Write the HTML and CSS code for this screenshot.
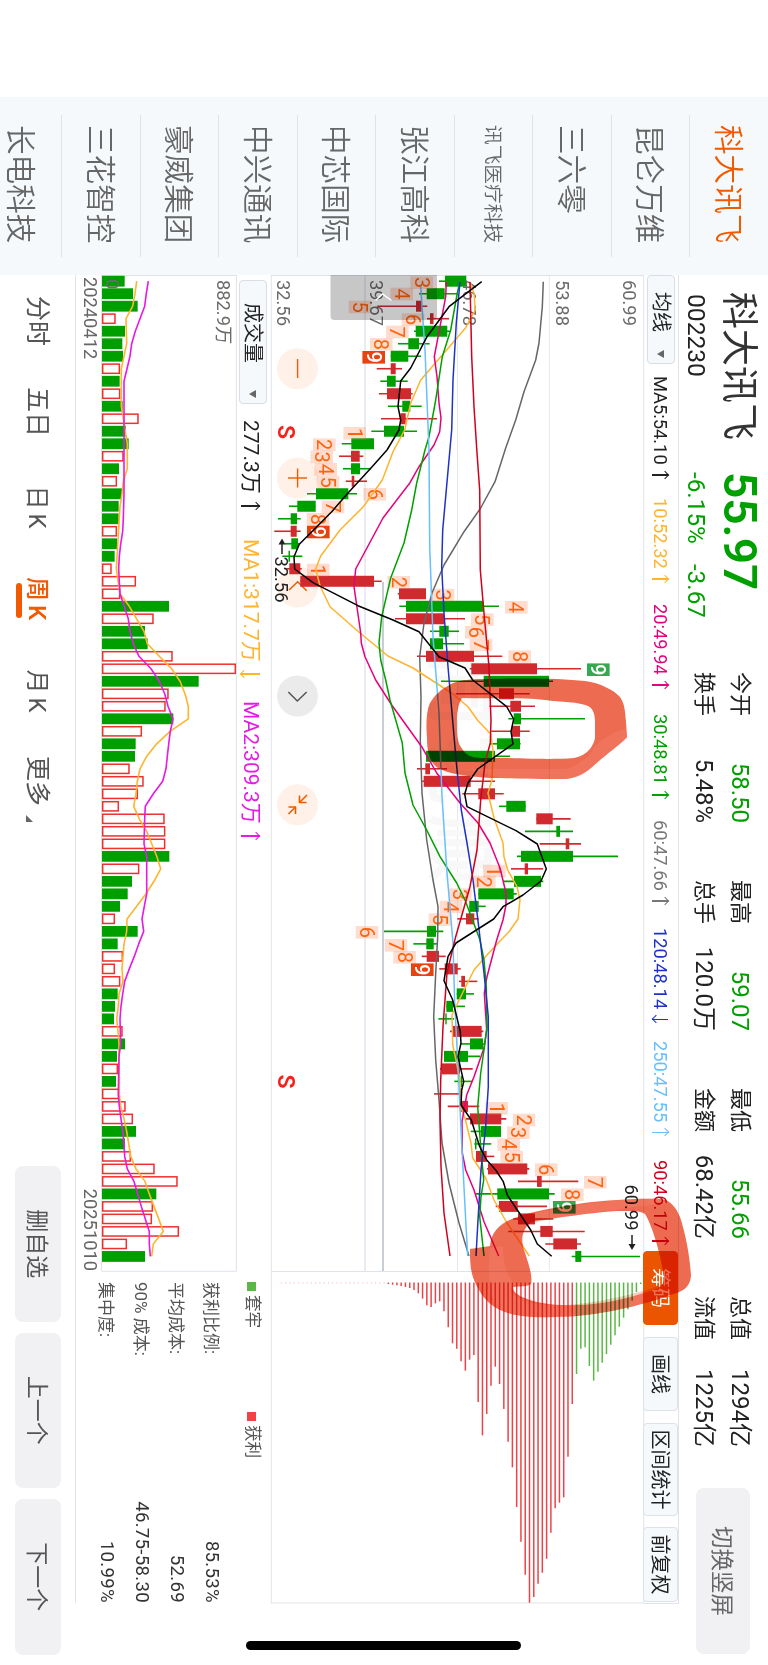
FILE: index.html
```html
<!DOCTYPE html>
<html lang="zh-CN">
<head>
<meta charset="utf-8">
<title>科大讯飞 002230</title>
<link rel="stylesheet" href="styles.css">
</head>
<body>
<div class="viewport">
<div class="screen">
  <nav class="watchlist">
    <div class="stock active">科大讯飞</div>
    <div class="stock">昆仑万维</div>
    <div class="stock">三六零</div>
    <div class="stock small">讯飞医疗科技</div>
    <div class="stock">张江高科</div>
    <div class="stock">中芯国际</div>
    <div class="stock">中兴通讯</div>
    <div class="stock">豪威集团</div>
    <div class="stock">三花智控</div>
    <div class="stock last-row">长电科技</div>
  </nav>
  <main class="main">
    <header class="quote">
      <div class="title"><div class="name">科大讯飞</div><div class="code">002230</div></div>
      <div class="last"><div class="price">55.97</div><div class="change"><span>-6.15%</span><span>-3.67</span></div></div>
      <dl class="stat"><dt>今开</dt><dd class="down">58.50</dd><dt>换手</dt><dd>5.48%</dd></dl>
      <dl class="stat"><dt>最高</dt><dd class="down">59.07</dd><dt>总手</dt><dd>120.0万</dd></dl>
      <dl class="stat"><dt>最低</dt><dd class="down">55.66</dd><dt>金额</dt><dd>68.42亿</dd></dl>
      <dl class="stat"><dt>总值</dt><dd>1294亿</dd><dt>流值</dt><dd>1225亿</dd></dl>
      <button class="switch">切换竖屏</button>
    </header>

    <div class="ma-bar">
      <div class="picker">均线<i></i></div>
      <span class="ma5">MA5:54.10<b class="ar up"></b></span>
      <span class="ma10">10:52.32<b class="ar up"></b></span>
      <span class="ma20">20:49.94<b class="ar up"></b></span>
      <span class="ma30">30:48.81<b class="ar up"></b></span>
      <span class="ma60">60:47.66<b class="ar up"></b></span>
      <span class="ma120">120:48.14<b class="ar dn"></b></span>
      <span class="ma250">250:47.55<b class="ar up"></b></span>
      <span class="ma90">90:46.17<b class="ar up"></b></span>
      <div class="tools">
        <button class="tool on">筹码</button>
        <button class="tool">画线</button>
        <button class="tool wide">区间统计</button>
        <button class="tool fq">前复权</button>
      </div>
    </div>

    <svg class="chart" id="price" viewBox="275 124 1329 374"></svg>

    <div class="lower">
      <section class="volume">
        <div class="vol-bar">
          <div class="picker vol">成交量<i></i></div>
          <span class="v0">277.3万<b class="ar up"></b></span>
          <span class="v1">MA1:317.7万<b class="ar dn"></b></span>
          <span class="v2">MA2:309.3万<b class="ar up"></b></span>
        </div>
        <svg class="volchart" id="volume" viewBox="275 530 997 137"></svg>
        <div class="dates"><span>20240412</span><span>20251010</span></div>
      </section>
      <aside class="chips">
        <div class="legend"><span><i class="sq green"></i>套牢</span><span><i class="sq red"></i>获利</span></div>
        <div class="row"><span>获利比例:</span><em>85.53%</em></div>
        <div class="row"><span>平均成本:</span><em>52.69</em></div>
        <div class="row"><span>90% 成本:</span><em>46.75-58.30</em></div>
        <div class="row"><span>集中度:</span><em>10.99%</em></div>
      </aside>
    </div>

    <footer class="periods">
      <a class="p1">分时</a><a class="p2">五日</a><a class="p3">日K</a><a class="p4 current">周K</a><a class="p5">月K</a><a class="p6">更多<i></i></a>
      <div class="actions"><button>删自选</button><button>上一个</button><button>下一个</button></div>
    </footer>
  </main>
  <svg class="pen" viewBox="0 0 768 1665">
    <path fill-rule="evenodd" d="M448 686C455 680 470 679 485 679C520 678 560 678 585 681C600 683 614 690 620 697C625 704 625 712 626 722L627 737C622 743 612 750 600 760C590 769 582 777 566 779C540 779 510 778 490 778C465 776 448 774 438 768C429 762 427 750 427 738C426 725 426 712 430 703C434 696 440 690 448 686Z M462 698C490 699 520 697 545 700C560 702 580 702 588 706C594 709 595 716 595 722L595 738C594 745 587 756 574 758C550 760 520 758 500 758C485 758 475 759 468 755C460 749 457 741 457 730C457 720 456 708 462 698Z"/>
    <path class="over" d="M626 729L627 738C618 746 606 754 598 762C588 771 580 779 564 779L500 778L470 769L566 769C580 764 590 757 594 747C602 740 612 731 626 729Z"/>
    <path fill-rule="evenodd" d="M470 1249L490 1246C491 1233 499 1224 512 1219C530 1211 560 1207 584 1203C610 1200 640 1198 661 1199C670 1200 676 1207 680 1217C686 1235 690 1258 691 1276C690 1288 682 1292 670 1295C650 1303 610 1313 577 1316C545 1318 520 1318 505 1312C488 1306 480 1294 474 1280C470 1270 470 1260 470 1249Z M531 1222C550 1218 600 1212 617 1211C630 1211 640 1210 645 1214C652 1225 660 1252 664 1276C665 1284 660 1289 650 1291C630 1298 600 1305 577 1305C555 1306 535 1303 522 1297C516 1294 513 1291 513 1287C520 1286 527 1287 531 1284C533 1276 528 1262 524 1250C521 1240 521 1231 531 1222Z"/>
    <path class="over" d="M490 1248L503 1246C503 1262 506 1276 516 1285L510 1290C512 1296 524 1303 545 1305C570 1307 620 1300 664 1284L672 1294C640 1306 600 1316 560 1317C530 1318 508 1315 498 1308C490 1296 487 1275 490 1248Z"/>
    <path class="over" d="M512 1219C550 1208 620 1197 661 1199L666 1203C630 1208 570 1215 531 1223Z"/>
  </svg>
  <div class="home"></div>
</div>
</div>
<script src="chart.js"></script>
</body>
</html>
```

FILE: styles.css
```css
html, body { margin: 0; padding: 0; background: #fff; }
* { box-sizing: border-box; }
button { border: 0; padding: 0; font: inherit; color: inherit; }
.viewport { width: 768px; height: 1665px; overflow: hidden; }
.screen {
  position: relative; width: 1665px; height: 768px; overflow: hidden;
  display: flex; padding-left: 97px;
  transform-origin: 0 0; transform: translateX(768px) rotate(90deg);
  font-family: Roboto, "Noto Sans CJK SC", sans-serif; color: #222; background: #fff;
  white-space: nowrap;
}
.watchlist { width: 178px; flex: none; background: #f5f9fb; height: 768px; overflow: hidden; }
.stock {
  height: 78.5px; margin: 0 18px; padding-left: 10px; padding-top: 3px;
  display: flex; align-items: center; font-size: 29.6px; line-height: 40px; color: #666;
  border-bottom: 1px solid #dfe3e6; font-weight: 350;
}
.stock.active { color: #f05a00; }
.stock.small { font-size: 19.7px; }
.stock.last-row { height: 61.5px; align-items: flex-start; padding-top: 21px; border: 0; }

.main { flex: 1; display: flex; flex-direction: column; }
.quote { height: 89px; width: 1390px; display: flex; align-items: flex-start; padding: 9px 11px 0 19px; flex: none; }
.title { width: 180px; padding-top: 1px; }
.name { font-size: 37px; line-height: 40px; color: #333; margin-left: -2px; }
.code { font-size: 24.6px; line-height: 30px; margin-top: 7px; color: #222; }
.last { width: 198px; color: #00a000; }
.price { font-size: 46px; line-height: 38px; font-weight: 600; margin-left: -2px; }
.change { display: flex; gap: 20px; font-size: 24.3px; line-height: 30px; margin: 10px 0 0 -2px; }
.stat { margin: 0 57px 0 0; width: 151px; display: grid; grid-template-columns: 50px 1fr; row-gap: 6px; font-size: 22px; line-height: 30px; padding-top: 4px; }
.stat dd { margin: 0; text-align: right; font-size: 24px; }
.stat dd.down { color: #00a000; }
.switch { margin: 9px 0 0 -16px; width: 166px; height: 53.5px; padding-bottom: 2px; border-radius: 8px; background: #f1f1f4; color: #666; font-size: 22.5px; }

.ma-bar {
  height: 35px; width: 1329px; flex: none; border-top: 1px solid #e1e4ea; border-right: 1px solid #e1e4ea;
  display: grid; grid-template-columns: 101px 122px 106px 110px 106px 108px 113px 119px 91px 352px;
  align-items: center; font-size: 18.3px; position: relative;
}
.picker {
  width: 89px; height: 28px; background: #f5f9fb; border: 1px solid #d9dee4; border-radius: 4px;
  display: flex; align-items: center; padding: 0 5px 0 16px; justify-content: space-between; font-size: 20px; line-height: 26px;
}
.picker i { border-left: 4.5px solid transparent; border-right: 4.5px solid transparent; border-top: 7px solid #666; }
.ar { display: inline-block; width: 10px; height: 17px; margin-left: 5px; vertical-align: -2px; position: relative; }
.ar::before { content: ""; position: absolute; left: 4.5px; top: 1px; bottom: 0; width: 1.4px; background: currentColor; }
.ar::after { content: ""; position: absolute; left: 2.2px; width: 5px; height: 5px; border: solid currentColor; border-width: 1.4px 0 0 1.4px; }
.ar.up::after { top: 1.5px; transform: rotate(45deg); }
.ar.dn::after { bottom: .5px; transform: rotate(225deg); }
.ma10 { color: #ffb42e; } .ma20 { color: #e6007e; } .ma30 { color: #00a000; } .ma60 { color: #777; }
.ma120 { color: #1e32c8; } .ma250 { color: #66bfff; } .ma90 { color: #d0021b; }
.tools { display: flex; height: 34px; }
.tool { width: 74px; margin-right: 12px; height: 35px; background: #f5f9fb; border: 1px solid #dde1e8; border-radius: 4px; font-size: 20px; color: #222; line-height: 30px; }
.tool.on { background: #eb5500; border-color: #eb5500; color: #fff; }
.tool.wide { width: 93px; margin-right: 11px; }
.tool.fq { width: 75px; margin-right: 0; }

.chart { width: 1329px; height: 374px; display: block; overflow: visible; flex: none; }
svg text { font-family: Roboto, "Noto Sans CJK SC", sans-serif; }
.axis { font-size: 18.3px; fill: #6b6b6b; }
.td { font-size: 20px; fill: #ff6310; text-anchor: middle; }
.td.box { fill: #fff; font-weight: 500; }
.mark { font-size: 18.3px; fill: #222; }
.sell { font-size: 23px; fill: #f5221b; text-anchor: middle; font-weight: 600; }
.water { font-size: 70px; fill: #f8f8f9; font-weight: 700; letter-spacing: 10px; }

.lower { display: flex; height: 195px; width: 1328px; border-bottom: 1px solid #e1e4e8; flex: none; }
.volume { width: 997px; }
.vol-bar { height: 32px; display: grid; grid-template-columns: 140px 119px 162px 1fr; padding-left: 5px; align-items: center; font-size: 21px; padding-top: 2px; }
.vol-bar .ar { margin-left: 7px; height: 20px; vertical-align: -3px; }
.picker.vol { width: 124px; padding: 0 5px 0 22px; }
.v1 { color: #ffb42e; } .v2 { color: #e619e6; }
.volchart { display: block; width: 997px; height: 137px; overflow: visible; }
.dates { display: flex; justify-content: space-between; font-size: 18.3px; line-height: 22px; color: #666; padding: 0 1px 0 2px; }
.chips { width: 331px; padding: 6px 0 0 10px; color: #444; }
.legend { display: flex; font-size: 16.6px; line-height: 24px; color: #555; height: 34px; }
.legend span { width: 130px; display: flex; align-items: center; gap: 4px; height: 24px; }
.sq { width: 9px; height: 9px; }
.sq.green { background: #5ab946; } .sq.red { background: #ee4444; }
.row { display: flex; justify-content: space-between; align-items: center; height: 35.1px; font-size: 17px; color: #555; }
.row em { font-style: normal; font-size: 18.6px; letter-spacing: .3px; color: #333; }

.periods { height: 75px; display: flex; position: relative; font-size: 25px; color: #555; align-items: flex-start; }
.periods a { padding-top: 21px; line-height: 34px; }
.p1 { width: 91px; margin-left: 21px; } .p2 { width: 98.5px; } .p3 { width: 91.5px; } .p4 { width: 92.5px; } .p5 { width: 86.5px; } .p6 { width: 410px; }
.p3, .p4, .p5 { letter-spacing: 4px; font-size: 24px; }
.current { color: #f05a00; font-weight: 500; position: relative; }
.current::after { content: ""; position: absolute; left: 6px; top: 53px; width: 35px; height: 5.5px; border-radius: 3px; background: #f05a00; }
.p6 i { display: inline-block; margin-left: 9px; border-left: 7px solid transparent; border-bottom: 7px solid #666; vertical-align: -3px; }
.actions { display: flex; gap: 11px; padding-top: 14px; }
.actions button { width: 155.5px; height: 46px; padding-bottom: 3px; border-radius: 8px; background: #f1f1f4; color: #555; font-size: 23px; }

.pen { position: absolute; left: 0; top: 768px; width: 768px; height: 1665px; transform-origin: 0 0; transform: rotate(-90deg); mix-blend-mode: multiply; filter: blur(.7px); pointer-events: none; }
.pen path { fill: #ed6b50; }
.pen .over { fill: #f3826c; opacity: .4; }
.home { position: absolute; left: 1641px; top: 247px; width: 9px; height: 275px; border-radius: 5px; background: #000; }
```

FILE: chart.js
```js
// Bars are spaced evenly along the time axis; values run along the cross axis.
const T0 = 281.2, STEP = 12.503;
const t = i => T0 + STEP * i;
const RED = '#d02a2e', GREEN = '#009f00';
const AXIS = 'matrix(0 -1 1 0 0 768)';
const rect = (x, y, w, h, fill, extra = '') => `<rect x="${x}" y="${y}" width="${w}" height="${h}" fill="${fill}" ${extra}/>`;
const line = (x1, y1, x2, y2, c, w = 1) => `<path d="M${x1} ${y1}L${x2} ${y2}" stroke="${c}" stroke-width="${w}" fill="none"/>`;
const poly = (pts, c, w = 1.5) => `<polyline points="${pts}" fill="none" stroke="${c}" stroke-width="${w}" stroke-linejoin="round"/>`;
const text = (X, Y, s, cls) => `<text x="${X}" y="${Y}" class="${cls}">${s}</text>`;

// [body low, body high, wick low, wick high, falling]
const candles = [
[445,466.3,439,466,1],[426.7,444.7,419,458,1],[416,421.5,377.3,427.3,0],[430,433.5,427,449,0],[415.7,447.3,414,451,1],
[408.3,419,398,429.7,1],[390.7,408.3,390.7,421,1],[390.7,395.7,376.7,402,0],[387,395.7,380.3,407.7,1],[387,411,379,412.7,0],
[402.3,410.3,388,421.7,1],[400.3,405.7,381,437,0],[384,404,371.3,417,1],[351.3,374,341.7,374,1],[351,359.7,339,363.3,0],
[351,360,343,371,1],[351.7,354.3,345.7,367,0],[316,348.3,307,357,1],[297.3,315.7,289,315.7,1],[290.7,297,278,300.7,1],
[290.7,296.7,274.3,300.7,0],[291.3,298,285,299.3,1],[288.5,290,282.3,302.3,1],[289.3,300.3,286.7,301.7,0],[300.3,374,300.3,381.7,0],
[399,426,397.7,426,0],[406,483.7,399.3,499,1],[406,444,395,465,0],[439.3,448.7,430,459,1],[430,443,430,464,1],
[426,474,417,502.3,0],[471.3,537,469.7,581,0],[483.7,549,441,553,1],[499,514,455.7,529.7,0],[510.3,521,489.3,535,0],
[513.7,521,508.3,585,1],[512,520,491.3,529.7,0],[497,520,489.7,520.7,1],[426,495,426,510,1],[425.3,430,417,447,0],
[423.7,470.7,422,495,0],[478.3,495,462.3,503.7,0],[506.3,525.7,499,525.7,1],[536.3,552.7,536.3,570.7,0],[556.3,560,525,573,1],
[565.7,569.3,539.7,581,0],[521,573,517,618,1],[524.7,528,511,543,0],[514,541,503,543.3,1],[478.3,513.7,478.3,516.7,1],
[469.3,478.7,469.3,485.7,1],[466,474.3,457.3,478.7,0],[427,436,384,443.3,1],[426.3,433.7,413.3,437.3,1],[426.7,439,421.7,445.7,0],
[444.7,457.7,439.3,460.7,0],[461.3,465,459,477.3,0],[456.7,466,456.7,474,1],[446.3,453,446.3,465,1],[445.3,446.7,438.3,454,1],
[452.3,481.7,450,483.3,0],[470,483,460.7,485,1],[444,468,444,480,1],[441.7,460,440,472.7,0],[460.7,462,454.3,472.3,1],
[460,461.5,434,461.7,0],[460.7,468,447.7,479.3,0],[470,501.3,466,506.3,0],[480.7,501,470.7,501,1],[475,476.5,474.3,491.3,1],
[476,486.7,476,494.3,0],[488,527.3,487,529.3,0],[537,541.7,518,578.3,0],[497.3,549,475.7,554.7,1],[499,517.7,495.7,547,0],
[518,535,513.3,553.3,0],[540.3,552.7,508.3,584.7,0],[553.3,577,545.3,581,0],[575.3,581.3,571.7,640,1]];

const averages = [
['#666','543.3,281.7 542.3,306.7 539,343 535.7,360 524,391.7 515.7,420 505.7,448 495,481.7 480.7,508 464,531.7 444,565 432,593 424,623 419.7,656.7 421,696.7 420.3,740 422,793 426.7,840 433,880 438,906.7 437.7,936.7 435.7,973 433.7,1016.7 435.7,1060 439,1100 442,1143 449,1183 459,1223 469,1256'],
['#ffb42e','470,282.7 474,293 475.3,310 465.7,327.7 442.3,355 420.7,380 410.7,403 404.7,430 393,451.7 382.3,480 363.3,506.7 340,530 320.7,556 315.7,569 320,585.7 330,606.7 360,633 388,656 413,668 453,694 468,706.7 478,720.7 490.7,734 493,750 492,780 488,793 494,818 503,843 504,856.7 507.7,870 517,886.7 520,900 518,919 509,931.7 501,940 487,955 474,970 464,990 452,1015 452.7,1045 456,1060 460,1080 460,1105 465,1118 471,1143 472.7,1158 485.7,1178 494,1200 507,1223 529.3,1256'],
['#e6007e','446.3,281.7 445.7,296.7 434.3,356.7 437,376.7 439,403 441,418 439.7,431.7 434,445 419,466.7 410,482.7 383,518 355.7,569 354,586.7 360.7,633 361.3,643 365,656.7 375.7,680 391.7,705 421.7,746.7 436.7,773 460,803 478,823 490,843 500,868 506,893 506,905 503,920 496.7,940 487,976.7 484.3,993 486.7,1030 484,1048 474,1076.7 466.7,1095 462,1121.7 462.3,1153 465.7,1170 474,1190 484,1221.7 498.7,1256'],
['#00a000','460,282 457.3,293 450.7,330 442.3,356.7 435.7,400 429,436.7 425,450 416.7,483 411.7,510 404,543 390.7,578 381.7,616.7 379,643 380.7,660 385.7,680 390,700 402.3,743 405,773 413,805 426.7,830 440,856.7 456.7,883 465,900 480,940 484,960 486.3,986.7 487,1026.7 484,1050 480.7,1073 477.7,1106.7 480.7,1146.7 483.7,1180 481,1196.7 479.7,1216.7 484,1256'],
['#1e32c8','460,281.7 456.3,323 453,380 451.7,430 446.3,490 442.7,530 441.7,566.7 444,613 448,666.7 452,713 456.7,766.7 461.3,810 467,843 473,880 478.7,926.7 484,973 488.3,1016.7 488.3,1086.7 485.7,1126.7 481,1170 478,1220 476,1256'],
['#66bfff','420.7,286.7 425,350 429,450 429.7,546.7 433,636.7 439,713 442,796.7 447,873 453,943 454.7,1003 458,1066.7 461.7,1143 465.7,1220 467.7,1256'],
['#d0021b','470,281.7 471.7,356.7 474,406.7 477,453 479.7,490 480.3,570 484,613 489,666.7 491,720 490.3,743 485,763 480.7,800 477,850 470,886.7 455.7,936.7 447,973 443,1026.7 440.7,1080 440,1120 441,1166.7 444,1213 450,1256'],
['#000','481.7,281.7 462,296.7 449,306.7 427,336.7 410.7,368 400.7,381 398,406.7 400.7,420 399,430 387,450 371,468 348,493 331.7,511.7 299.3,544.3 294,556.7 294.7,569 313,582.7 358,605.7 393,620 419,631.7 439,656.7 465,668 472.7,680 506.7,706.7 513.7,719 511,731.7 513,744 477.7,769 468,783 464.7,794 467,806.7 516,830.7 537.3,844 546.3,869 541,881 523,895 503,906.7 493.7,919 456,943 448,956.7 444,980.7 452.7,1000 460.3,1031.7 461,1043 458,1056.7 463.7,1081.7 461.7,1090 461,1105 471.3,1120 479.7,1146.7 486.7,1160 495.7,1170 503.3,1181.7 507.3,1195 530.7,1230 537.3,1244 551.7,1256.3']];

// sequence counters: [digit, value, time, highlight]
const counts = [[3,421.7,282.7],[4,401.7,294],[5,360,307],[6,413,319.7],[7,397.3,332],[8,381.3,344.3],[9,373.7,357.3,'#e8420f'],
[1,354.7,433.3],[2,324.3,444.7],[3,321.7,457],[4,325.7,469.3],[5,328,482],[6,374.7,494.3],[7,333,507],[8,318,519.3],[9,318.3,532,'#e8420f'],
[1,318.3,570],[2,398.7,582.3],[3,443,595],[4,516.3,607.3],[5,482.3,619.7],[6,476.3,632.3],[7,481,645],[8,519.7,656.7],[9,598.3,669.7,'#37a850'],
[1,494.3,871],[2,484.3,882],[3,460.3,894.7],[4,451,907],[5,440,919.7],[6,367,932.3],[7,396,945.3],[8,404.7,957.3],[9,422.3,969.7,'#e8420f'],
[1,496.7,1108.3],[2,524,1120],[3,518.3,1132.7],[4,508.7,1144.7],[5,511.7,1157],[6,546.3,1169.7],[7,595.3,1182.3],[8,572.3,1194.7],[9,564.3,1207.3,'#37a850']];

const chipEnds = [72,96,122,148,173,200,226,254,282,308,335,362,318,262,266,342,432,590,712,728,745,818,896,938,971,1011,1028,944,845,741,622,545,447,372,320,377,462,526,426,285,299,332,304,266,250,202,154,124,130,141,136,116,100,90,84,81,78,76,74,72];

let p = text(655, 334, '同花顺', 'water');
const GRID = '#e6e8ef';
let g = '';
for (const v of [457.5, 549.3]) g += line(v, 275, v, 1271, GRID);
g += line(365, 275, 365, 1271, GRID, 1.6);
g += line(271.3, 275, 271.3, 1603, '#dfe3e8') + line(643.7, 275, 643.7, 1603, '#e1e4ea');
g += line(271, 1271.5, 643.7, 1271.5, '#dfe3e8') + line(271, 1603, 643.7, 1603, '#dfe3e8') + line(271, 275.5, 643.7, 275.5, '#dfe3e8');
g += line(383, 582, 383, 1271, '#c9ced4', 2);
p = `<g transform="${AXIS}">${g}</g>` + p;

// round control buttons
let c = '';
for (const y of [368.7, 478, 587, 804.7]) c += `<circle cx="297.5" cy="${y}" r="20.5" fill="#fff0e8"/>`;
c += '<circle cx="297.5" cy="696" r="20.5" fill="#ebebeb"/>';
const O = '#f05a00';
c += line(297.6, 359, 297.6, 378, O, 1.4) + line(297.6, 468.5, 297.6, 487.5, O, 1.4) + line(288, 478, 307, 478, O, 1.4);
c += poly('289,590 297.7,581.7 306.7,590.7', O) + poly('288.3,692 297.3,701 306.7,692', '#555');
c += poly('299.5,795.5 299.5,802.5 306.5,802.5', O, 1.6) + line(299.5, 802.5, 307, 795, O, 1.6);
c += poly('288.5,807 295.5,807 295.5,814', O, 1.6) + line(295.5, 807, 288.5, 814, O, 1.6);

let k = '';
candles.forEach(([a, b, l, h, dn], i) => {
  const col = dn ? GREEN : RED;
  k += line(l, t(i), h, t(i), col, 1.6) + rect(a, t(i) - 5.5, b - a, 11, col);
});
p += `<g transform="${AXIS}">${c}${k}</g>`;

for (const [n, v, y, hot] of counts) {
  const Y = 768 - v;
  p += rect(y - 6.3, Y - 11.3, 12.6, 22.6, hot || 'rgba(255,140,90,.3)') + text(y, Y + 7.2, n, hot ? 'td box' : 'td');
}
p += text(280, 145, '60.99', 'axis') + text(280, 212.5, '53.88', 'axis') + text(280, 305.5, '46.78', 'axis') + text(280, 398, '39.67', 'axis') + text(280, 491, '32.56', 'axis');
p += `<g transform="${AXIS}">` + averages.map(([col, pts]) => poly(pts, col)).join('') + '</g>';
p += text(556.5, 493, '32.56', 'mark') + text(1184.5, 143, '60.99', 'mark');
p += '<path d="M544 486H554M1235 136H1245" stroke="#222" stroke-width="1.5"/><path d="M538.5 486l6-3.5v7zM1250 136l-6-3.5v7z" fill="#222"/>';
p += text(432, 490, 'S', 'sell') + text(1081.5, 490, 'S', 'sell');
p += '<path d="M275 331H316a4 4 0 0 1 4 4V433.500a4 4 0 0 1-4 4H275z" fill="rgba(0,0,0,.22)"/><path d="M300.500 392.500L294 385.500L300.500 376.500" fill="none" stroke="#fff" stroke-width="1.4"/>';

let hist = '';
chipEnds.forEach((e, i) => {
  const x = 640.7 - 4.277 * i;
  hist += line(x, 1282.5, x, 1260 + e / 3, i < 16 ? '#5ab946' : '#ea4448', 1.5);
});
for (let i = chipEnds.length; 640.7 - 4.277 * i > 281; i++) {
  const x = 640.7 - 4.277 * i;
  hist += rect(x - .6, 1282.3, 1.2, 1.2, '#f7c4c6');
}
p += `<g transform="${AXIS}">${hist}</g>`;
document.getElementById('price').innerHTML = p;

// volume: bar ends in thirds of a pixel, capital G marks a falling week
const vols = '374G 399G 413G 347 375G 367G 369G 360 359G 361 368G 416 378G 386G 371 357G 351 366G 356G 356G 351 351G 344G 335 408 361 507G 461 435G 443G 518 708 596G 506 497 520G 426 407G 405G 389 431 414 357 494 496 496 508G 418 396G 383G 360G 345 413G 353G 369 345 361 353G 345G 342G 368 375G 351G 354 348G 358 377 399 408G 375G 393 464 533 469G 459 456 537 381 435G'.split(' ');
const ma1 = {0:410,1:405,2:398,3:378,5:380,7:364,10:364,11:370,13:382,15:382,16:370,17:366,18:360,23:349,25:360,26:388,28:432,29:442,30:478,31:515,32:540,33:555,34:565,35:565,36:510,37:470,38:440,39:420,40:412,41:408,42:401,43:418,44:440,45:455,46:470,47:482,48:462,49:438,50:410,51:381,52:380,53:372,54:369,55:366,56:369,57:357,58:355,59:350,60:354,61:357,62:356,63:358,65:358,66:362,67:372,68:380,69:386,70:392,71:408,72:435,73:448,74:462,75:476,76:490,77:460,78:455};
const ma2 = {0:445,1:439,2:434,3:420,4:406,5:395,6:390,7:381,8:372,17:372,19:370,20:368,21:362,22:358,23:356,24:358,25:360,26:373,27:385,28:390,29:400,30:417,31:453,32:478,33:494,34:504,35:519,36:511,37:506,38:502,39:498,40:488,41:460,42:436,43:434,45:432,46:440,49:440,50:433,51:426,52:431,53:416,54:403,55:388,56:374,57:368,58:363,59:360,61:362,62:357,65:355,66:358,67:363,68:368,69:372,70:374,71:382,72:402,73:413,74:424,75:436,76:448,77:448,78:451};
const series = o => Object.entries(o).map(([i, v]) => (v / 3).toFixed(1) + ',' + t(+i).toFixed(1)).join(' ');
let v = line(101.5, 275, 101.5, 1271, '#dfe3e8') + line(236.4, 275, 236.4, 1271, '#dfe3e8') + line(101.5, 275.5, 236.4, 275.5, '#dfe3e8') + line(101.5, 1271.3, 236.4, 1271.3, '#dfe3e8');
vols.forEach((s, i) => {
  const e = parseInt(s, 10) / 3;
  v += s.endsWith('G') ? rect(102, t(i) - 5.4, e - 102, 10.8, '#009f00')
    : rect(102.7, t(i) - 4.6, e - 103.4, 9.2, '#fff', 'stroke="#f02f2f" stroke-width="1.5"');
});
document.getElementById('volume').innerHTML = `<g transform="${AXIS}">${v}</g>` + text(280, 551, '882.9万', 'axis') + text(279, 662, '0', 'axis') +
  `<g transform="${AXIS}">${poly(series(ma1), '#ffb42e', 1.6)}${poly(series(ma2), '#e619e6', 1.6)}</g>`;
```
